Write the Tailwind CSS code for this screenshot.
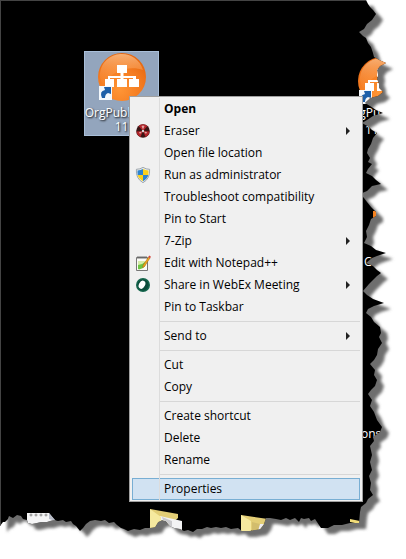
<!DOCTYPE html>
<html lang="en">
<head>
<meta charset="utf-8">
<title>Desktop shortcut menu</title>
<script src="https://cdn.jsdelivr.net/npm/@tailwindcss/browser@4"></script>
</head>
<body class="bg-white font-['Open_Sans','Noto_Sans',sans-serif] text-xs text-black">
<main class="relative min-h-screen overflow-hidden">

<!-- Desktop with a torn right and bottom edge -->
<svg class="absolute top-0 left-0" width="406" height="559" viewBox="0 0 406 559" aria-hidden="true">
  <defs>
    <path id="tear" d="M0 0H366L368 4 370 7 373 10 376 14 372 20 367 24 364 29 359 32 363 36 366 38 368 43 371 47 373 53 374 57 379 60 386 63 380 66 377 70 378 75 377 79 379 84 379 88 383 92 378 96 370 98 365 103 370 106 376 110 383 113 373 116 367 120 362 123 369 127 372 130 377 133 373 138 371 144 368 149 367 153 370 158 368 162 372 164 368 169 366 173 372 176 376 180 381 184 372 186 367 191 360 194 364 198 367 202 371 207 376 212 376 216 371 219 369 225 366 231 367 237 364 243 371 246 376 250 386 253 377 256 372 258 366 263 373 266 377 270 381 273 377 276 373 280 369 284 363 291 367 295 373 299 384 303 374 306 368 309 366 313 371 317 374 322 380 327 381 333 379 337 382 343 378 349 377 355 374 360 370 364 375 370 374 375 377 380 375 386 371 390 368 394 372 400 370 406 374 412 377 420 382 427 380 432 373 437 374 441 370 446 372 455 370 462 372 470 369 476 371 483 370 490 373 495 368 499 366 503 361 507 360 512 359 523 350 523 342 525 334 525 328 528 321 528 317 522 315 519 311 521 309 518 304 519 301 518 299 522 295 518 290 520 286 518 281 520 276 519 270 518 266 518 264 524 260 529 254 530 249 531 242 531 238 528 231 529 226 527 221 528 216 527 211 528 207 527 202 529 197 529 193 532 188 530 184 531 180 529 174 528 170 526 166 521 162 520 158 522 155 527 149 528 145 528 140 530 134 529 128 531 124 529 121 528 117 525 114 522 109 523 105 520 101 521 95 520 90 521 86 524 83 528 80 531 76 526 73 524 71 521 66 522 63 520 58 521 54 520 50 521 47 522 41 522 37 523 32 524 28 523 27 520 23 519 21 516 17 515 13 518 9 516 8 519 5 522 3 522 0 526Z"/>
    <clipPath id="torn"><use href="#tear"/></clipPath>
    <filter id="soft" x="-5%" y="-5%" width="110%" height="110%"><feGaussianBlur stdDeviation="1.500"/></filter>
    <radialGradient id="orange" cx=".45" cy=".75" r=".75"><stop offset="0" stop-color="#ff9637"/><stop offset=".6" stop-color="#f47b20"/><stop offset="1" stop-color="#e4660f"/></radialGradient>
    <linearGradient id="gloss" x2="0" y2="1"><stop offset="0" stop-color="#ffcfa0" stop-opacity=".7"/><stop offset="1" stop-color="#ff9a48" stop-opacity=".1"/></linearGradient>
    <g id="app">
      <circle cx="24" cy="24" r="24" fill="url(#orange)"/>
      <path d="M2 20A22 22 0 0 1 45 17C34 13 17 15 5 31Q1 26 2 20Z" fill="url(#gloss)"/>
      <path d="M19 12H29V20H25.500V23H38V26H41V34H31V26H35V25H25.500V26H29V34H19V26H22.500V25H12V26H16V34H7V26H10V23H22.500V20H19Z" fill="#fff"/>
      <path d="M1 33H14V47H1Z" fill="#f4f8fc"/>
      <path d="M4 45Q1 38 7 37L6 34H13V41L10 40Q7 41 7 45Z" fill="#1d5fa8"/>
    </g>
    <g id="folder">
      <path d="M0 0 28 5V9L11 24H0Z" fill="#e3ce76"/>
      <path d="M10 7 32 12V26H10Z" fill="#f3f3f4"/>
      <path d="M12 8 22 12V26H18Z" fill="#c9c9cc"/>
      <path d="M0 0 11 8V28H0Z" fill="#f6e99f"/>
    </g>
  </defs>
  <use href="#tear" transform="translate(7 6)" fill="#6e6e6e" filter="url(#soft)"/>
  <use href="#tear"/>
  <g clip-path="url(#torn)">
    <path d="M0 .5H366M.5 0V526" stroke="#444"/>
    <use href="#app" transform="translate(358 57)"/>
    <g fill="#fff" font-size="12">
      <text x="345" y="117">OrgPu</text>
      <text x="365" y="134">11</text>
      <text x="364" y="266">C</text>
      <text x="361" y="438">ons</text>
    </g>
    <path d="M373 211H379V218H373Z" fill="#f58220"/>
    <path d="M27 513H49L56 522V532H27Z" fill="#f5f5f6"/>
    <path d="M49 513V519L56 521Z" fill="#b8bcc8"/>
    <g fill="none" stroke="#888"><circle cx="31" cy="515" r="1"/><circle cx="36" cy="515" r="1"/><circle cx="41" cy="515" r="1"/><circle cx="46" cy="515" r="1"/></g>
    <use href="#folder" transform="translate(150 509)"/>
    <g transform="translate(241 515)">
      <path d="M0 0 27 4V8L20 17H0Z" fill="#e3ce76"/>
      <path d="M11 7 23 10 20 17H11Z" fill="#d2bd6d"/>
      <path d="M19 9 23 9 21 16H17Z" fill="#ededf4"/>
      <path d="M0 0 10 6V17H0Z" fill="#f6e99f"/>
    </g>
    <path d="M350 519 360 521V524L350 522Z" fill="#f1dc79"/>
  </g>
</svg>

<!-- Selected shortcut -->
<a href="#" class="absolute top-[51px] left-[84px] flex w-[75px] flex-col items-center border border-[#a9bfd9] bg-[#93a5bd] pb-px text-center leading-[14px] text-white [text-shadow:1px_1px_2px_#000]">
  <svg width="50" height="50" viewBox="-1 -1 50 50" aria-hidden="true"><use href="#app"/></svg>
  <span class="mt-1">OrgPublisher<br>11</span>
</a>

<!-- Context menu -->
<div role="menu" aria-label="Shortcut actions" class="absolute top-[96px] left-[129px] flex w-[234px] flex-col border border-[#a0a0a0] bg-[#f0f0f0] px-[2px] py-px">
  <div class="pointer-events-none absolute inset-y-px left-[29px] w-px bg-[#dcdcdc]"></div>

  <button role="menuitem" class="flex h-[22px] items-center pl-8 font-bold">Open</button>
  <button role="menuitem" class="flex h-[22px] items-center pr-[9px] pl-[3px]">
    <svg class="mr-[13px]" width="16" height="16" viewBox="0 0 16 16" aria-hidden="true"><circle cx="8" cy="8" r="6.800" fill="#3a1515"/><path d="M8 8 3.500 3A6.600 6.600 0 0 1 12.500 3ZM8 8 14.500 8.500A6.600 6.600 0 0 1 10.500 14ZM8 8 1.500 8.500A6.600 6.600 0 0 0 5.500 14Z" fill="#b3252b"/><path d="M8 6.500 6.500 3Q8 2 9.500 3ZM9 8.700 12 9 11 11ZM7 8.700 4 9 5 11Z" fill="#dfa5a3"/><circle cx="8" cy="8" r="1.200" fill="#ddd"/></svg>
    <span>Eraser</span>
    <svg class="ml-auto" width="6" height="8" viewBox="0 0 6 8" aria-hidden="true"><path d="M1 0 5 4 1 8Z" fill="#222"/></svg>
  </button>
  <button role="menuitem" class="flex h-[22px] items-center pl-8">Open file location</button>
  <button role="menuitem" class="flex h-[22px] items-center pl-[3px]">
    <svg class="mr-[13px]" width="16" height="16" viewBox="0 0 16 16" aria-hidden="true"><path d="M8 .4Q11 2.300 14.600 2.300 15.400 11.500 8 15.700 .6 11.500 1.400 2.300 5 2.300 8 .4Z" fill="#e9edf0" stroke="#8a949c" stroke-width=".8"/><path d="M8 2V8H2.700Q2.400 6 2.500 3.500 5.500 3.400 8 2Z" fill="#2d83cf"/><path d="M8 2Q10.500 3.400 13.500 3.500 13.600 6 13.300 8H8Z" fill="#fbd11b"/><path d="M2.700 8H8V14.200Q3.700 12 2.700 8Z" fill="#fbd11b"/><path d="M8 8H13.300Q12.300 12 8 14.200Z" fill="#2d83cf"/></svg>
    <span>Run as administrator</span>
  </button>
  <button role="menuitem" class="flex h-[22px] items-center pl-8">Troubleshoot compatibility</button>
  <button role="menuitem" class="flex h-[22px] items-center pl-8">Pin to Start</button>
  <button role="menuitem" class="flex h-[22px] items-center pr-[9px] pl-8">
    <span>7-Zip</span>
    <svg class="ml-auto" width="6" height="8" viewBox="0 0 6 8" aria-hidden="true"><path d="M1 0 5 4 1 8Z" fill="#222"/></svg>
  </button>
  <button role="menuitem" class="flex h-[22px] items-center pl-[3px]">
    <svg class="mr-[13px]" width="16" height="16" viewBox="0 0 16 16" aria-hidden="true"><path d="M1.500 2.500H12.500V15.500H1.500Z" fill="#fbfbf7" stroke="#777"/><path d="M3 6 11 6V10Q7 15 3 14Z" fill="#d5ecaa"/><path d="M3 10Q7 10 10 7V11Q7 15 3 14Z" fill="#6cc443"/><path d="M3 1V4M5 1V4M7 1V4M9 1V4M11 1V4" stroke="#555" stroke-width=".8"/><path d="M13.500 2 15 3 9.500 11.500 7.700 12.700 8 10.500Z" fill="#f3a51b" stroke="#9b6413" stroke-width=".5"/><path d="M14.200 .5 16 1.700 15 3.200 13.400 2.100Z" fill="#d4423a"/></svg>
    <span>Edit with Notepad++</span>
  </button>
  <button role="menuitem" class="flex h-[22px] items-center pr-[9px] pl-[3px]">
    <svg class="mr-[13px]" width="16" height="16" viewBox="0 0 16 16" aria-hidden="true"><circle cx="8" cy="8" r="7" fill="#14654c"/><circle cx="8" cy="8" r="5.500" fill="#0b4b3b"/><ellipse cx="7" cy="7.700" rx="3" ry="4.300" transform="rotate(28 7 7.700)" fill="#fff"/></svg>
    <span>Share in WebEx Meeting</span>
    <svg class="ml-auto" width="6" height="8" viewBox="0 0 6 8" aria-hidden="true"><path d="M1 0 5 4 1 8Z" fill="#222"/></svg>
  </button>
  <button role="menuitem" class="flex h-[22px] items-center pl-8">Pin to Taskbar</button>

  <div role="separator" class="my-[3px] ml-7 h-px bg-[#d7d7d7]"></div>
  <button role="menuitem" class="flex h-[22px] items-center pr-[9px] pl-8">
    <span>Send to</span>
    <svg class="ml-auto" width="6" height="8" viewBox="0 0 6 8" aria-hidden="true"><path d="M1 0 5 4 1 8Z" fill="#222"/></svg>
  </button>

  <div role="separator" class="my-[3px] ml-7 h-px bg-[#d7d7d7]"></div>
  <button role="menuitem" class="flex h-[22px] items-center pl-8">Cut</button>
  <button role="menuitem" class="flex h-[22px] items-center pl-8">Copy</button>

  <div role="separator" class="my-[3px] ml-7 h-px bg-[#d7d7d7]"></div>
  <button role="menuitem" class="flex h-[22px] items-center pl-8">Create shortcut</button>
  <button role="menuitem" class="flex h-[22px] items-center pl-8">Delete</button>
  <button role="menuitem" class="flex h-[22px] items-center pl-8">Rename</button>

  <div role="separator" class="my-[3px] ml-7 h-px bg-[#d7d7d7]"></div>
  <button role="menuitem" class="flex h-[22px] items-center border border-[#78aed3] bg-[#d1e2f2] pl-[31px]">Properties</button>
</div>
</main>
</body>
</html>
